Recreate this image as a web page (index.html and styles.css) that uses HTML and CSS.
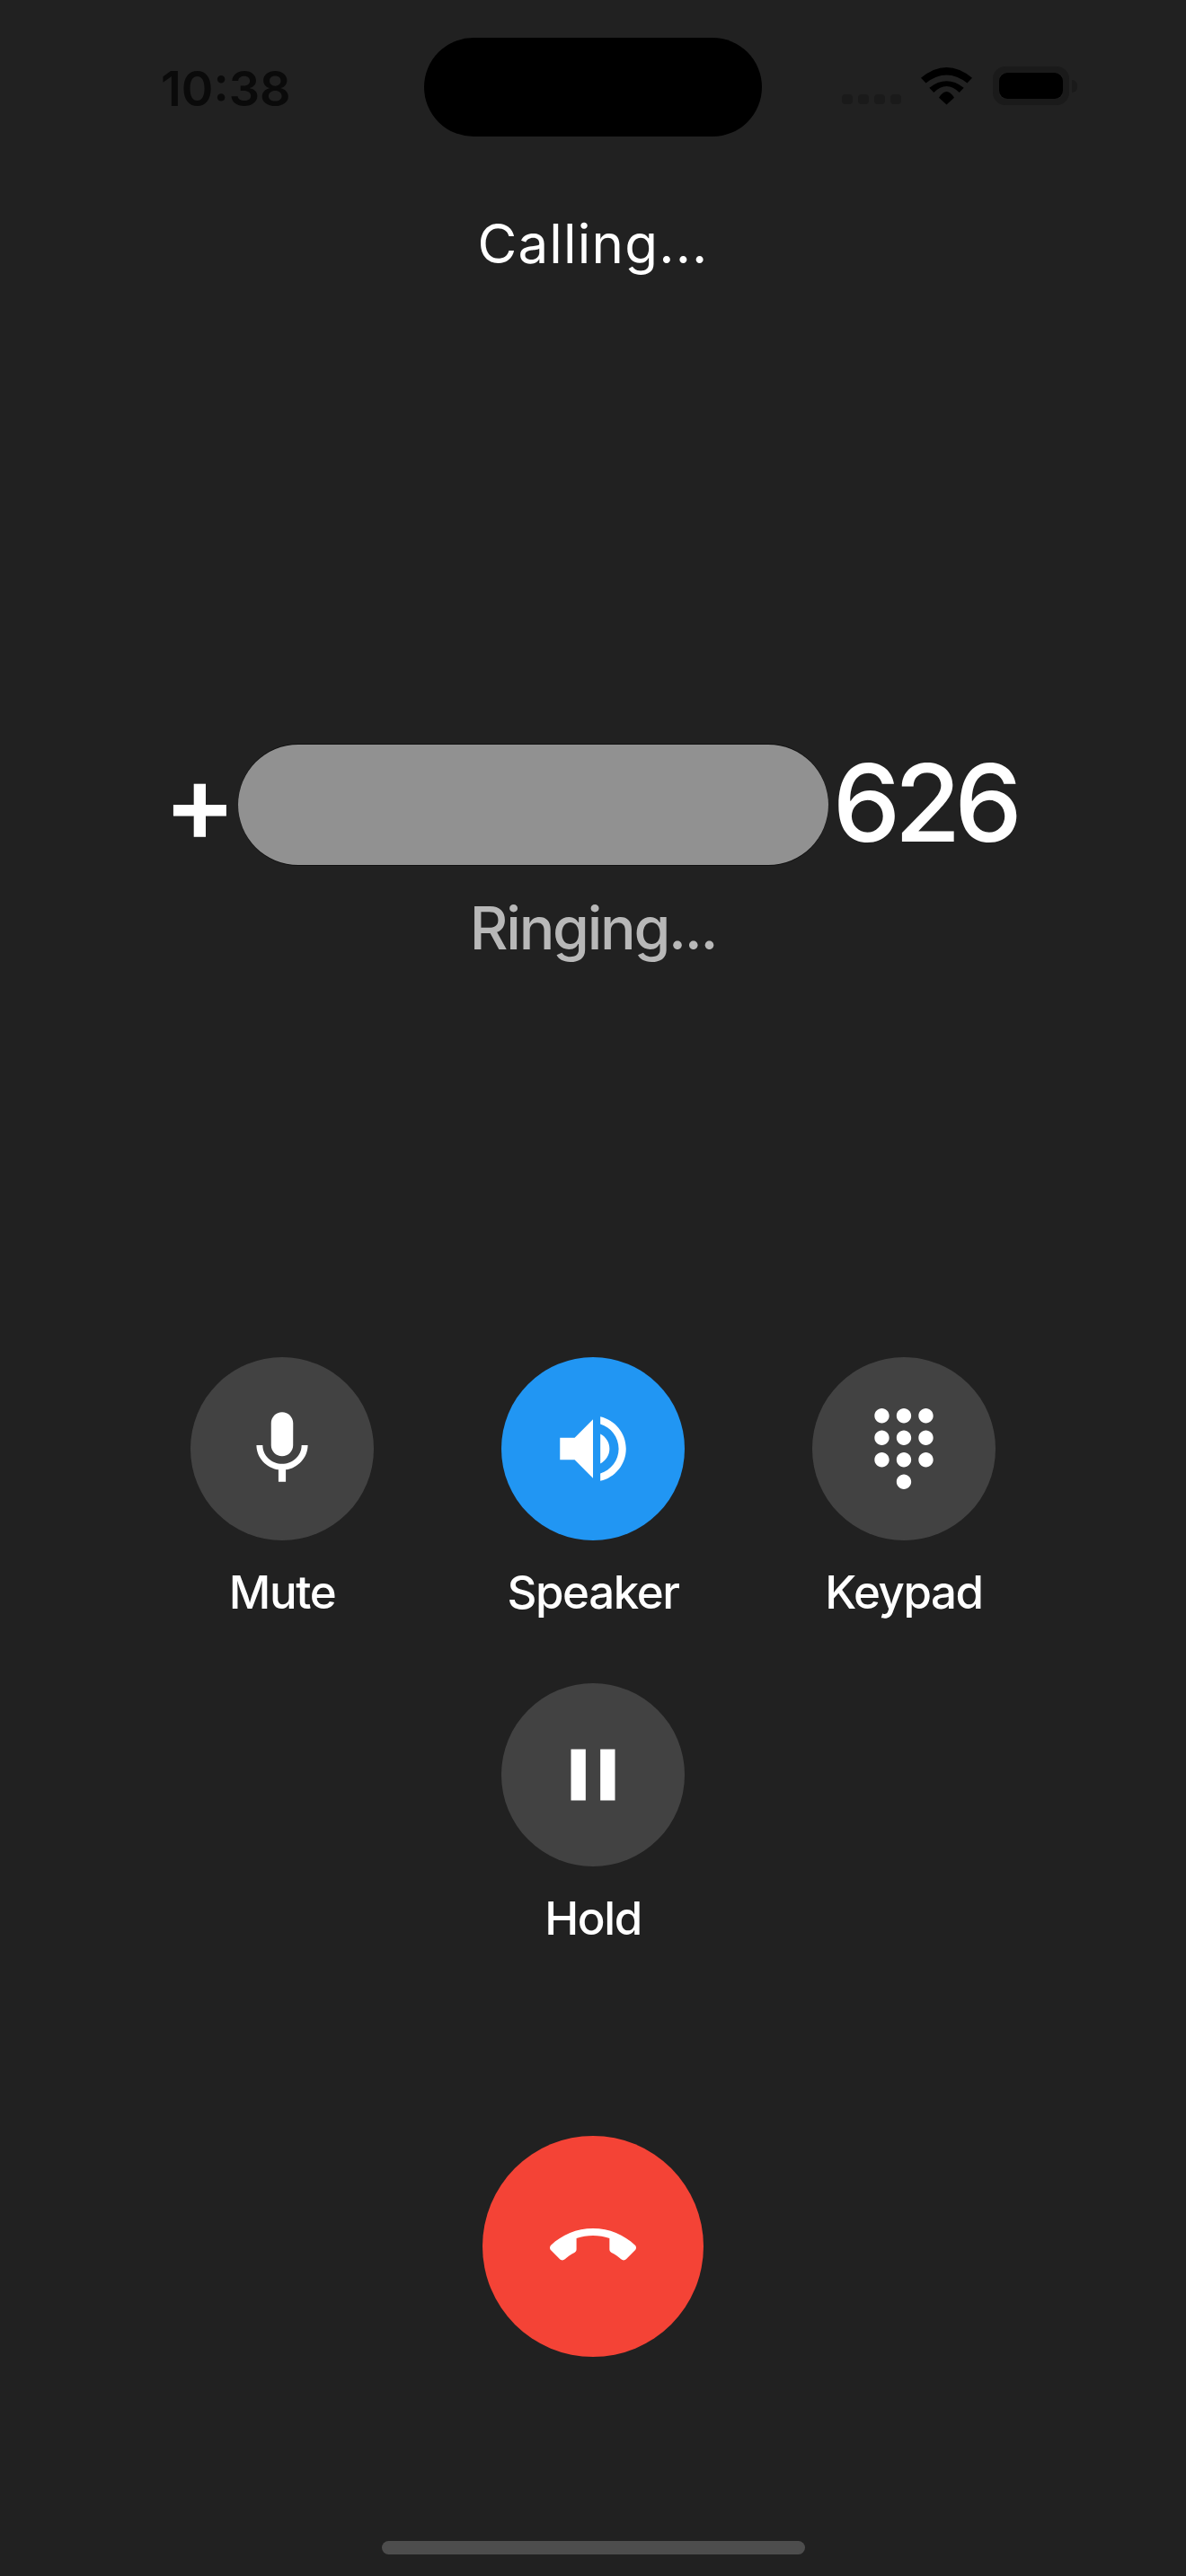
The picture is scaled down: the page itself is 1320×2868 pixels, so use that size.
FILE: index.html
```html
<!DOCTYPE html>
<html lang="en">
<head>
<meta charset="utf-8">
<title>Calling</title>
<link rel="stylesheet" href="styles.css">
</head>
<body>
<main class="screen">
  <header class="status">
    <div class="time">10:38</div>
    <div class="island"></div>
    <div class="status-icons">
      <div class="signal"><span class="dot"></span><span class="dot"></span><span class="dot"></span><span class="dot"></span></div>
      <svg class="wifi" viewBox="0 0 57 42" aria-hidden="true">
        <path d="M0 11.7Q28.5-11.7 57 11.7L51.5 17.5Q28.5-.5 5.5 17.5Z"/>
        <path d="M9.3 22.7Q28.5 7.9 47.7 22.7L42.7 28Q28.5 14 14.3 28Z"/>
        <path d="M20 33.7Q28.5 20.3 37 33.7L28.5 41.5Z"/>
      </svg>
      <div class="battery"><div class="battery-body"><div class="battery-fill"></div></div><div class="battery-nub"></div></div>
    </div>
  </header>

  <h1 class="title">Calling...</h1>

  <div class="number">
    <span class="plus">+</span>
    <div class="redaction"></div>
    <span class="digits">626</span>
  </div>
  <p class="state">Ringing...</p>

  <section class="controls">
    <div class="control">
      <div class="circle"><svg class="icon" viewBox="0 0 24 24"><path d="M12 14c1.66 0 2.99-1.34 2.99-3L15 5c0-1.66-1.34-3-3-3S9 3.34 9 5v6c0 1.66 1.34 3 3 3zm5.3-3c0 3-2.54 5.1-5.3 5.1S6.7 14 6.7 11H5c0 3.41 2.72 6.23 6 6.72V21h2v-3.28c3.28-.48 6-3.3 6-6.72h-1.7z"/></svg></div>
      <div class="label">Mute</div>
    </div>
    <div class="control">
      <div class="circle circle-active"><svg class="icon" viewBox="0 0 24 24"><path d="M3 9v6h4l5 5V4L7 9H3zm13.5 3c0-1.77-1.02-3.29-2.5-4.03v8.05c1.48-.73 2.5-2.25 2.5-4.02zM14 3.23v2.06c2.89.86 5 3.54 5 6.71s-2.11 5.85-5 6.71v2.06c4.01-.91 7-4.49 7-8.77s-2.99-7.86-7-8.77z"/></svg></div>
      <div class="label">Speaker</div>
    </div>
    <div class="control">
      <div class="circle"><svg class="icon" viewBox="0 0 24 24"><path d="M12 19c-1.1 0-2 .9-2 2s.9 2 2 2 2-.9 2-2-.9-2-2-2zM6 1c-1.1 0-2 .9-2 2s.9 2 2 2 2-.9 2-2-.9-2-2-2zm0 6c-1.1 0-2 .9-2 2s.9 2 2 2 2-.9 2-2-.9-2-2-2zm0 6c-1.1 0-2 .9-2 2s.9 2 2 2 2-.9 2-2-.9-2-2-2zm12-8c1.1 0 2-.9 2-2s-.9-2-2-2-2 .9-2 2 .9 2 2 2zm-6 8c-1.1 0-2 .9-2 2s.9 2 2 2 2-.9 2-2-.9-2-2-2zm6 0c-1.1 0-2 .9-2 2s.9 2 2 2 2-.9 2-2-.9-2-2-2zm0-6c-1.1 0-2 .9-2 2s.9 2 2 2 2-.9 2-2-.9-2-2-2zm-6 0c-1.1 0-2 .9-2 2s.9 2 2 2 2-.9 2-2-.9-2-2-2zm0-6c-1.1 0-2 .9-2 2s.9 2 2 2 2-.9 2-2-.9-2-2-2z"/></svg></div>
      <div class="label">Keypad</div>
    </div>
    <div class="control control-hold">
      <div class="circle"><svg class="icon" viewBox="0 0 24 24"><path d="M6 19h4V5H6v14zm8-14v14h4V5h-4z"/></svg></div>
      <div class="label">Hold</div>
    </div>
  </section>

  <div class="hangup"><svg class="icon-end" viewBox="0 0 24 24"><path d="M12 9c-1.6 0-3.15.25-4.6.72v3.1c0 .39-.23.74-.56.9-.98.49-1.87 1.12-2.66 1.85-.18.18-.43.28-.7.28-.28 0-.53-.11-.71-.29L.29 13.08c-.18-.17-.29-.42-.29-.7 0-.28.11-.53.29-.71C3.34 8.78 7.46 7 12 7s8.66 1.78 11.71 4.67c.18.18.29.43.29.71 0 .28-.11.53-.29.71l-2.48 2.48c-.18.18-.43.29-.71.29-.27 0-.52-.11-.7-.28-.79-.74-1.69-1.36-2.67-1.85-.33-.16-.56-.5-.56-.9v-3.1C15.15 9.25 13.6 9 12 9z"/></svg></div>

  <div class="home-bar"></div>
</main>
</body>
</html>
```
FILE: styles.css
```css
* { box-sizing: border-box; }
html, body { margin: 0; padding: 0; background: #212121; }
body { font-family: Inter, "Liberation Sans", sans-serif; color: #fff; }

.screen {
  width: 1320px;
  height: 2868px;
  background: #212121;
  display: flex;
  flex-direction: column;
  align-items: center;
  overflow: hidden;
}

.status {
  width: 100%;
  height: 152px;
  padding-top: 42px;
  display: grid;
  grid-template-columns: 472px 376px 1fr;
  align-items: start;
}
.time {
  padding-left: 179px;
  padding-top: 27px;
  font-size: 54px;
  line-height: 60px;
  font-weight: 600;
  color: #0a0a0a;
}
.island { height: 110px; border-radius: 55px; background: #000; }
.status-icons { display: flex; align-items: flex-end; padding-left: 89px; padding-top: 33px; height: 75px; }
.signal { display: flex; gap: 6px; margin-bottom: 1px; }
.dot { width: 12px; height: 11px; border-radius: 4px; background: #1a1a1a; }
.wifi { width: 57px; height: 42px; margin-left: 22px; fill: #000; display: block; }
.battery { display: flex; align-items: center; margin-left: 23px; }
.battery-body { width: 85px; height: 43px; border: 7px solid #1a1a1a; border-radius: 14px; }
.battery-fill { width: 100%; height: 100%; background: #000; border-radius: 9px; }
.battery-nub { width: 6px; height: 14px; margin-left: 3px; border-radius: 0 7px 7px 0; background: #1a1a1a; }

.title {
  margin: 83px 0 0;
  font-size: 60px;
  line-height: 72px;
  font-weight: 400;
  letter-spacing: 1.2px;
}

.number {
  margin-top: 522px;
  height: 134px;
  padding-right: 7px;
  display: flex;
  align-items: flex-start;
  font-size: 120px;
  line-height: 130px;
  font-weight: 500;
}
.plus { font-weight: 600; }
.digits { letter-spacing: -7px; margin-left: 5px; }
.redaction {
  width: 657px;
  height: 134px;
  margin-left: 2px;
  border-radius: 67px;
  background: #919191;
  box-shadow: 0 -1px 0 rgba(0, 0, 0, .5), 0 1px 0 rgba(0, 0, 0, .5);
}

.state {
  margin: 30px 0 0;
  font-size: 66px;
  line-height: 80px;
  font-weight: 500;
  color: #b8b8b8;
  letter-spacing: -2.3px;
}

.controls {
  margin-top: 438px;
  display: grid;
  grid-template-columns: repeat(3, 346px);
  row-gap: 71px;
}
.control { display: flex; flex-direction: column; align-items: center; }
.control-hold { grid-column: 2; }
.circle {
  width: 204px;
  height: 204px;
  border-radius: 50%;
  background: #424242;
  display: flex;
  align-items: center;
  justify-content: center;
}
.circle-active { background: #2196f3; }
.icon { width: 98px; height: 98px; fill: #fff; display: block; }
.label {
  margin-top: 28px;
  font-size: 51px;
  line-height: 60px;
  font-weight: 500;
  letter-spacing: -1.4px;
}

.hangup {
  margin-top: 212px;
  width: 246px;
  height: 246px;
  border-radius: 50%;
  background: #f44336;
  display: flex;
  align-items: center;
  justify-content: center;
}
.icon-end { width: 96px; height: 96px; fill: #fff; display: block; }

.home-bar {
  margin-top: 205px;
  width: 471px;
  height: 15px;
  border-radius: 8px;
  background: #4d4d4d;
}
```
